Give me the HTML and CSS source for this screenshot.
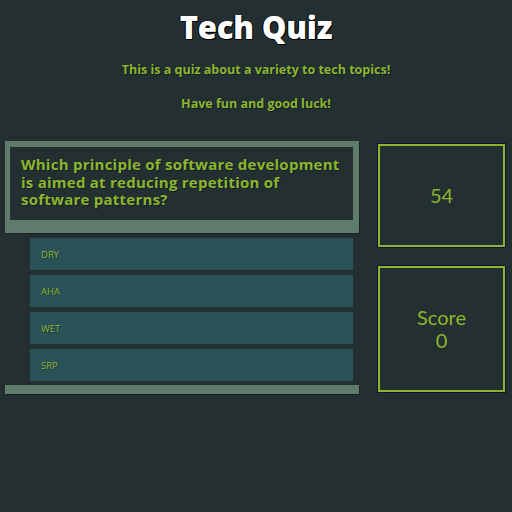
FILE: index.html
```html
<!DOCTYPE html>
<html>
<head>
<meta charset="utf-8">
<link rel="stylesheet" href="styles.css">
</head>
<body>
<header class="header">
  <h1 class="title">Tech Quiz</h1>
  <p class="intro">This is a quiz about a variety to tech topics!</p>
  <p class="intro intro-2">Have fun and good luck!</p>
</header>
<main class="main">
  <section class="quiz">
    <div class="question-card">
      <h2 class="question">Which principle of software development<br>is aimed at reducing repetition of<br>software patterns?</h2>
    </div>
    <ul class="answers">
      <li class="answer">DRY</li>
      <li class="answer">AHA</li>
      <li class="answer">WET</li>
      <li class="answer">SRP</li>
    </ul>
    <div class="quiz-footer"></div>
  </section>
  <aside class="side">
    <div class="panel timer">54</div>
    <div class="panel score">
      <div class="panel-line">Score</div>
      <div class="panel-line">0</div>
    </div>
  </aside>
</main>
</body>
</html>
```
FILE: styles.css
```css
* { box-sizing: border-box; }
html, body { margin: 0; padding: 0; }
body {
  background: #242f32;
  font-family: "Open Sans", Lato, sans-serif;
  color: #8db52b;
  width: 512px;
  height: 512px;
  overflow: hidden;
}
.header { text-align: center; }
.title {
  margin: 0;
  padding-top: 8px;
  font-size: 31px;
  line-height: 38px;
  font-weight: 800;
  letter-spacing: -0.2px;
  color: #ffffff;
  text-shadow: 1px 1px 0 #000, -1px 0 0 #000, 0 1px 0 #000;
}
.intro {
  margin: 16px 0 0;
  font-size: 12.5px;
  line-height: 15px;
  font-weight: 700;
  text-shadow: 1px 1px 0 #10202a;
}
.intro-2 { margin-top: 19px; }
.main {
  display: flex;
  align-items: flex-start;
  padding: 0 5px;
  margin-top: 30px;
}
.quiz { width: 354px; }
.question-card {
  background: #5e7b6b;
  padding: 6px 6px 13px 5px;
  box-shadow: 1px 1px 0 #1a2226;
}
.question {
  margin: 0;
  background: #242f32;
  height: 73px;
  padding: 9px 0 0 11px;
  font-size: 15px;
  letter-spacing: 0.25px;
  line-height: 17.5px;
  font-weight: 700;
  white-space: nowrap;
  text-shadow: 1px 1px 0 #10202a;
}
.answers {
  list-style: none;
  margin: 5px 0 0 25px;
  padding: 0;
  width: 323px;
  display: flex;
  flex-direction: column;
  gap: 5px;
}
.answer {
  background: #2a5258;
  height: 32px;
  padding-left: 11px;
  display: flex;
  align-items: center;
  font-size: 9.5px;
  text-shadow: 1px 1px 0 #1a3a40;
}
.quiz-footer {
  margin-top: 4px;
  height: 9px;
  background: #5e7b6b;
  box-shadow: 1px 1px 0 #1a2226;
}
.side {
  margin-left: 19px;
  margin-top: 3px;
  width: 127px;
  display: flex;
  flex-direction: column;
  gap: 19px;
}
.panel {
  border: 2px solid #8db52b;
  box-shadow: 0 0 0 1px #0c1340;
  display: flex;
  flex-direction: column;
  align-items: center;
  justify-content: center;
  text-align: center;
  font-family: Lato, "Open Sans", sans-serif;
  font-size: 20px;
  line-height: 23px;
}
.timer { height: 103px; }
.score { height: 126px; }
```
